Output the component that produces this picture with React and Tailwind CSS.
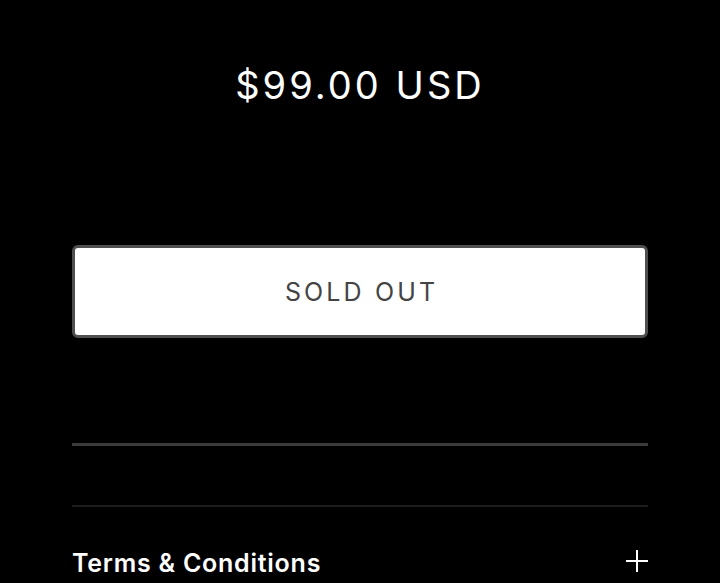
export default function App() {
  return (
    <div className="w-[720px] h-[583px] bg-black overflow-hidden" style={{ fontFamily: "Inter, 'Noto Sans', sans-serif" }}>
      <div className="px-[72px]">
        <div className="pt-[66px] text-center text-white text-[38px] leading-[38px] tracking-[0.08em] font-normal">
          $99.00 USD
        </div>
        <button className="mt-[141px] w-full h-[93px] bg-white border-[3px] border-[#4f4f4f] rounded-[6px] flex items-center justify-center text-[#444444] text-[25px] tracking-[0.125em] font-normal" style={{ fontFamily: "Inter, 'Noto Sans', sans-serif" }}>
          <span className="pl-[0.125em] pt-[2px]">SOLD OUT</span>
        </button>
        <div className="mt-[105px] h-[3px] bg-[#3a3a3a]" />
        <div className="mt-[59px] h-[2px] bg-[#1c1c1c]" />
        <div className="mt-[41px] flex items-center justify-between">
          <span className="text-white text-[25px] leading-[30px] font-semibold tracking-[0.03em]">Terms &amp; Conditions</span>
          <svg width="24" height="24" viewBox="0 0 24 24" className="mr-[-1px] mt-[-4px]">
            <path d="M12 1v22M1 12h22" stroke="white" strokeWidth="2" />
          </svg>
        </div>
      </div>
    </div>
  );
}
